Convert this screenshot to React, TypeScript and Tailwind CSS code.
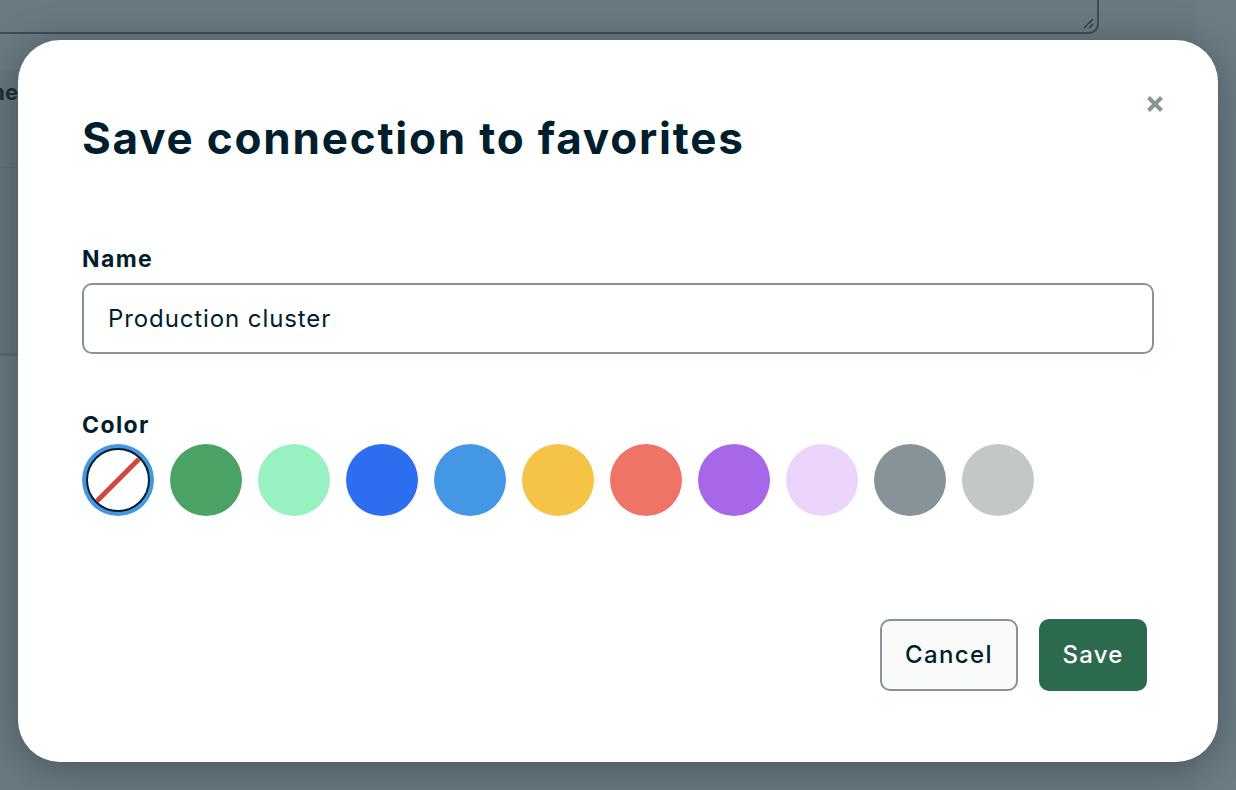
import { useState } from 'react';

const swatches = [
  '#4aa364',
  '#97f1c0',
  '#2d6ef0',
  '#4497e4',
  '#f5c345',
  '#ee7467',
  '#a866e8',
  '#ebd5fa',
  '#889397',
  '#c3c7c6',
];

function NoColorSwatch() {
  return (
    <div className="w-[72px] h-[72px] rounded-full bg-[#4397e3] flex items-center justify-center">
      <div className="w-[64px] h-[64px] rounded-full border-2 border-[#001e2b] bg-white overflow-hidden">
        <svg viewBox="0 0 60 60" className="w-full h-full">
          <line x1="5" y1="55" x2="55" y2="5" stroke="#d1473b" strokeWidth="5" />
        </svg>
      </div>
    </div>
  );
}

export default function App() {
  const [name, setName] = useState('Production cluster');

  return (
    <div className="relative w-[1236px] h-[790px] overflow-hidden bg-[#6b7980] font-['Inter',sans-serif] text-[#001e2b]">
      {/* page behind the backdrop */}
      <div className="flex h-full">
        <div className="flex flex-col w-[1196px]">
          <div className="h-[34px] w-[1099px] border-b-2 border-r-2 border-[#3c4d56] rounded-br-[10px] relative">
            <svg viewBox="0 0 12 12" className="absolute right-[3px] bottom-[3px] w-[12px] h-[12px]">
              <line x1="2" y1="11" x2="11" y2="2" stroke="#2b3a42" strokeWidth="1.2" />
              <line x1="7" y1="11" x2="11" y2="7" stroke="#2b3a42" strokeWidth="1.2" />
            </svg>
          </div>
          <div className="mt-[36px] w-[18px] h-[286px] bg-[#67767d] border-b-[3px] border-[#5d6b72] flex flex-col">
            <div className="h-[97px] overflow-hidden flex justify-end items-start pt-[6px]">
              <span className="text-[22px] font-bold text-[#1f2d34] whitespace-nowrap">Name</span>
            </div>
            <div className="h-px bg-[#5f6d74]" />
          </div>
        </div>
        <div className="flex-1 bg-[#6e7c83]" />
      </div>

      {/* modal */}
      <div className="absolute left-[18px] top-[40px] w-[1200px] h-[722px] bg-white rounded-[42px] shadow-[0_6px_40px_rgba(0,20,30,0.35)] px-[64px] pt-[70px] flex flex-col">
        <button className="absolute right-[52px] top-[53px] w-[22px] h-[22px] flex items-center justify-center">
          <svg viewBox="0 0 20 20" className="w-[20px] h-[20px]">
            <line x1="3.5" y1="3.5" x2="16.5" y2="16.5" stroke="#889397" strokeWidth="4" />
            <line x1="16.5" y1="3.5" x2="3.5" y2="16.5" stroke="#889397" strokeWidth="4" />
          </svg>
        </button>

        <h1 className="text-[44px] leading-[56px] font-bold tracking-[1.8px]">Save connection to favorites</h1>

        <label className="mt-[79px] text-[23px] leading-[28px] font-bold tracking-[1.4px]">Name</label>
        <input
          value={name}
          onChange={(e) => setName(e.target.value)}
          className="mt-[10px] w-[1072px] h-[71px] rounded-[10px] border-2 border-[#889397] px-[24px] text-[24px] tracking-[0.9px] text-[#001e2b] outline-none"
        />

        <div className="mt-[57px] text-[23px] leading-[28px] font-bold tracking-[1.4px]">Color</div>
        <div className="mt-[5px] flex gap-[16px]">
          <NoColorSwatch />
          {swatches.map((c) => (
            <div key={c} className="w-[72px] h-[72px] rounded-full" style={{ backgroundColor: c }} />
          ))}
        </div>

        <div className="mt-[103px] flex justify-end gap-[21px] pr-[7px]">
          <button className="w-[138px] h-[72px] rounded-[10px] border-2 border-[#889397] bg-[#f9fbfa] text-[24px] font-medium tracking-[1.4px] text-[#001e2b]">
            Cancel
          </button>
          <button className="w-[108px] h-[72px] rounded-[10px] bg-[#2c6a4e] text-[24px] font-medium tracking-[1.2px] text-white">
            Save
          </button>
        </div>
      </div>
    </div>
  );
}
